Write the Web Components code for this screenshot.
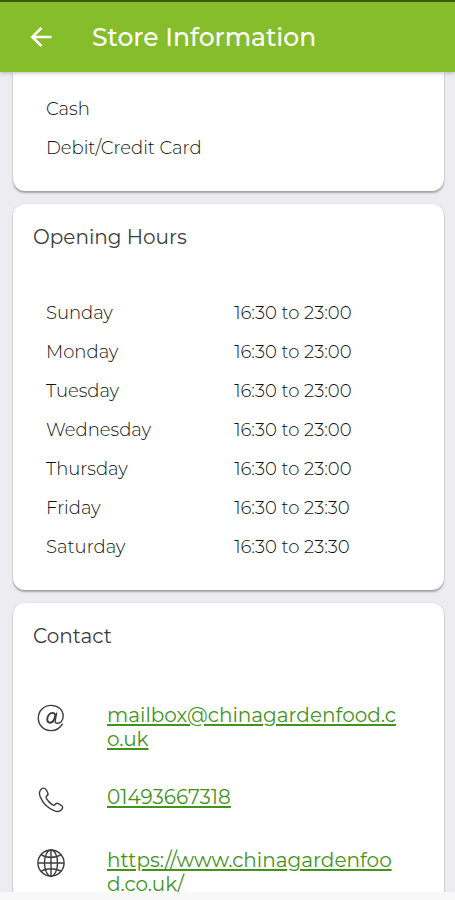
<!DOCTYPE html>
<html lang="en">
<head>
<meta charset="utf-8">
<meta name="viewport" content="width=device-width, initial-scale=1">
<title>Store Information</title>
<style>
  html, body { height: 100%; margin: 0; }
  body { font-family: Montserrat, Inter, "Open Sans", sans-serif; font-weight: 400; color: #3c3c3c; background: #ededf1; }
</style>
</head>
<body>
<store-screen>
  <app-bar slot="bar">Store Information</app-bar>
  <info-card continued>
    <payment-list></payment-list>
  </info-card>
  <info-card>
    <span slot="title">Opening Hours</span>
    <opening-hours></opening-hours>
  </info-card>
  <info-card last>
    <span slot="title">Contact</span>
    <contact-row href="mailto:mailbox@chinagardenfood.co.uk" icon="mail" label="Email">mailbox@chinagardenfood.co.uk</contact-row>
    <contact-row href="tel:01493667318" icon="phone" label="Phone">01493667318</contact-row>
    <contact-row href="https://www.chinagardenfood.co.uk/" icon="web" label="Website">https://www.chinagardenfood.co.uk/</contact-row>
  </info-card>
</store-screen>

<script>
const define = (name, render) => customElements.define(name, class extends HTMLElement {
  connectedCallback() {
    if (this.shadowRoot) return;
    this.attachShadow({ mode: 'open' }).innerHTML = render(this);
  }
});

define('store-screen', () => `
  <style>
    :host { display: flex; flex-direction: column; height: 100vh; }
    main { flex: 1; min-height: 0; overflow-y: auto; scrollbar-width: none; padding: 0 11px 0 13px; display: flex; flex-direction: column; gap: 13px; }
    footer { flex: none; height: 8px; background: #f8f8f9; }
  </style>
  <slot name="bar"></slot>
  <main><slot></slot></main>
  <footer></footer>`);

define('app-bar', () => `
  <style>
    :host { display: block; flex: none; position: relative; z-index: 1; border-top: 2px solid #3c5a12; background: #86bd2b; box-shadow: 0 1px 4px rgba(60, 60, 90, .35); color: #fff; }
    header { display: flex; align-items: center; gap: 36px; height: 70px; padding: 0 26px; }
    button { flex: none; width: 30px; height: 30px; padding: 0; border: 0; background: none; color: inherit; }
    svg { display: block; width: 30px; height: 30px; }
    h1 { margin: 0; font-size: 25px; line-height: 32px; font-weight: 500; white-space: nowrap; }
  </style>
  <header>
    <button type="button" aria-label="Back">
      <svg viewBox="0 0 30 30" fill="none" stroke="currentColor" stroke-width="2.6"><path d="M25.500 15H6.500M15.500 5.800 6.300 15l9.200 9.200"/></svg>
    </button>
    <h1><slot></slot></h1>
  </header>`);

define('info-card', el => `
  <style>
    :host { display: block; flex: none; box-sizing: border-box; background: #fff; border-radius: 12px; padding: 21px 20px 23px; box-shadow: 0 2px 2px rgba(0, 0, 0, .3), 0 0 2px rgba(0, 0, 0, .12); }
    :host([continued]) { border-radius: 0 0 12px 12px; padding-top: 18px; }
    h2 { margin: 0 0 45px; font-size: 20px; line-height: 24px; font-weight: inherit; }
    div { padding: 0 13px; }
    :host([last]) div { padding: 10px 4px 0; display: grid; gap: 34px; }
  </style>
  ${el.hasAttribute('continued') ? '' : '<h2><slot name="title"></slot></h2>'}
  <div><slot></slot></div>`);

define('payment-list', () => `
  <style>
    :host { display: block; font-size: 18px; line-height: 39px; font-weight: 300; color: #111; }
    ul { list-style: none; margin: 0; padding: 0; }
  </style>
  <ul><li>Cash</li><li>Debit/Credit Card</li></ul>`);

const hours = [
  ['Sunday', '16:30 to 23:00'], ['Monday', '16:30 to 23:00'], ['Tuesday', '16:30 to 23:00'],
  ['Wednesday', '16:30 to 23:00'], ['Thursday', '16:30 to 23:00'],
  ['Friday', '16:30 to 23:30'], ['Saturday', '16:30 to 23:30']
];
define('opening-hours', () => `
  <style>
    :host { display: block; font-size: 18px; line-height: 39px; font-weight: 300; color: #111; }
    table { width: 100%; border-collapse: collapse; table-layout: fixed; }
    th, td { padding: 0; text-align: left; font-weight: inherit; }
    th { width: 51%; }
    td { width: 49%; padding-left: 4px; }
  </style>
  <table><tbody>${hours.map(([d, h]) => `<tr><th scope="row">${d}</th><td>${h}</td></tr>`).join('')}</tbody></table>`);

const icons = {
  mail: `<path d="M27.500 21C24.600 26 19.800 28.700 14.400 28.500 6.800 28.100 1.300 22.300 1.400 14.900 1.500 7.300 7.400 1.500 15 1.500c7.300 0 13 4.500 13 11.400 0 4.800-2.700 7.800-6 7.800-2 0-2.800-1.200-2.500-3l1.600-8.400"/><path stroke-width="2" d="M19.600 12.300c-.3-1.800-1.400-2.800-3.100-2.800-3.200 0-5.500 3.600-5.500 6.900 0 2.300 1.100 3.700 2.900 3.700 2.700 0 4.900-3.300 5.700-7.800z"/>`,
  phone: `<path d="M4.500 3.500c1.500-1.600 3.800-1.600 5 .2l1.800 3c.8 1.400.5 3-.8 3.900-1 .8-1.100 1.600-.5 2.700 1.700 3 3.700 5.100 6.700 6.900 1.200.7 2 .5 2.700-.4 1-1.300 2.500-1.600 3.900-.7l3 1.900c1.600 1.100 1.500 3.100 0 4.400-2 2-4.400 2.500-7.400 1.300C11.500 23.700 6 18.200 3.300 11.300 2.100 8.200 2.400 5.600 4.500 3.500z"/>`,
  web: `<circle cx="15" cy="15" r="14"/><ellipse cx="15" cy="15" rx="7" ry="14"/><path d="M15 1v28M1 15h28M4.500 6c5 3.800 16 3.800 21 0M4.500 24c5-3.800 16-3.800 21 0"/>`
};
define('contact-row', el => `
  <style>
    :host { display: flex; align-items: flex-start; gap: 42px; font-size: 20px; line-height: 24px; }
    svg { flex: none; width: 28px; height: 28px; padding-top: 1px; color: #3c3c3c; }
    a { flex: 0 1 296px; min-width: 0; color: #43931b; text-decoration: underline; text-decoration-thickness: 2px; text-underline-offset: 2px; word-break: break-all; }
  </style>
  <svg viewBox="0 0 30 30" fill="none" stroke="currentColor" stroke-width="1.5" role="img" aria-label="${el.getAttribute('label')}">${icons[el.getAttribute('icon')]}</svg>
  <a href="${el.getAttribute('href')}"><slot></slot></a>`);
</script>
</body>
</html>
